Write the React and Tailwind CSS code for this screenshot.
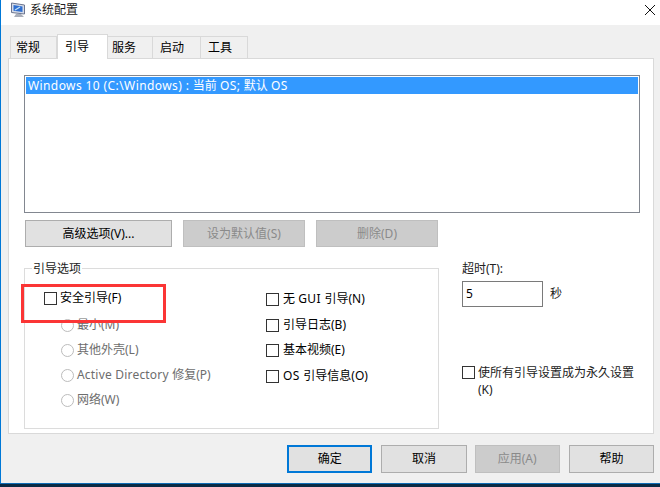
const FONT = '"Noto Sans", "Noto Sans CJK SC", sans-serif';

function L({ children }) {
  return <span className="tracking-[0.4px]">{children}</span>;
}

function S({ children }) {
  return <span className="tracking-[0.2px]">{children}</span>;
}

function Tab({ label, active, className }) {
  return (
    <div
      className={
        (active
          ? "h-[25px] -mb-px z-10 relative bg-white border border-b-0 border-[#d9d9d9] flex items-start pt-[3px] text-[12px] leading-[18px] text-black "
          : "h-[22px] bg-[#f0f0f0] border border-b-0 border-l-0 border-[#d9d9d9] flex items-start pt-[2px] text-[12px] leading-[18px] text-black ") + className
      }
    >
      {label}
    </div>
  );
}

function Btn({ children, disabled, primary, className }) {
  const tone = disabled
    ? "bg-[#cccccc] border-[#bfbfbf] text-[#8a8a8a]"
    : primary
      ? "bg-[#e1e1e1] border-[#0078d7] border-2 text-black"
      : "bg-[#e1e1e1] border-[#adadad] text-black";
  return (
    <div className={"border flex items-center justify-center text-[12px] leading-none " + tone + " " + className}>
      {children}
    </div>
  );
}

function Check({ children, className = "", gap = "ml-[3px]" }) {
  return (
    <div className={"flex items-center h-[14px] text-[12px] text-black " + className}>
      <span className="w-[13px] h-[13px] border border-[#333333] bg-white shrink-0" />
      <span className={gap + " whitespace-nowrap leading-none"}>{children}</span>
    </div>
  );
}

function Radio({ children }) {
  return (
    <div className="flex items-center h-[14px] text-[12px] text-[#6d6d6d]">
      <span className="w-[13px] h-[13px] rounded-full border border-[#bcbcbc] bg-white shrink-0" />
      <span className="ml-[3px] whitespace-nowrap leading-none">{children}</span>
    </div>
  );
}

export default function App() {
  return (
    <div className="w-[660px] h-[487px] relative overflow-hidden flex flex-col bg-[#f0f0f0]" style={{ fontFamily: FONT }}>
      <div className="h-[483px] flex flex-col border-l border-l-[#0078d7]">
        <div className="h-[25px] bg-white flex items-center shrink-0 pb-[5px]">
          <svg width="16" height="16" viewBox="0 0 16 16" className="ml-[9px]">
            <path d="M1.5 1 L14.5 3 V12 L1.5 10.5 Z" fill="#d5dbe8" stroke="#6b7590" strokeWidth="1" />
            <path d="M3.5 3 L12.5 4.4 V10 L3.5 8.8 Z" fill="#2f6fd0" />
            <path d="M5 8 L10 5" stroke="#bfe0f8" strokeWidth="1.4" fill="none" />
            <path d="M6 12 H11 L14 15 H4 Z" fill="#a9aeb9" />
          </svg>
          <span className="ml-[4px] text-[12px] text-[#222222] leading-none">系统配置</span>
          <svg width="10" height="10" viewBox="0 0 10 10" className="ml-auto mr-[5px]">
            <path d="M0 0 L10 10 M10 0 L0 10" stroke="#111111" strokeWidth="1" fill="none" />
          </svg>
        </div>

        <div className="flex-1 flex flex-col pl-[7px] pr-[6px] pt-[9px]">
          <div className="flex items-end h-[24px] pl-[2px]">
            <Tab label="常规" className="w-[47px] pl-[5px] border-l!" />
            <Tab label="引导" active className="w-[51px] pl-[7px]" />
            <Tab label="服务" className="w-[45px] pl-[4px]" />
            <Tab label="启动" className="w-[48px] pl-[7px]" />
            <Tab label="工具" className="w-[47px] pl-[7px]" />
          </div>

          <div className="h-[376px] bg-white border border-[#d9d9d9] flex flex-col pl-[15px] pr-[13px] pt-[16px]">
            <div className="h-[138px] border border-[#828790] p-[1px] bg-white">
              <div className="h-[17px] bg-[#3399ff] text-white text-[12px] leading-[17px] pl-[2px] whitespace-nowrap">
                <L>Windows 10 (C:\Windows) : </L>当前 <L>OS; </L>默认 <L>OS</L>
              </div>
            </div>

            <div className="flex mt-[7px] pl-[1px] h-[27px]">
              <Btn className="w-[147px]">高级选项(V)...</Btn>
              <Btn disabled className="w-[122px] ml-[11px]">设为默认值(S)</Btn>
              <Btn disabled className="w-[122px] ml-[11px]">删除(D)</Btn>
            </div>

            <div className="flex mt-[14px]">
              <div className="relative w-[415px] h-[161px] mt-[7px] border border-[#dcdcdc] flex pt-[22px]">
                <span className="absolute left-[7px] -top-[8px] bg-white px-[1px] text-[12px] leading-[16px] text-[#222222]">引导选项</span>
                <div className="w-[241px] pl-[19px] flex flex-col">
                  <Check>安全引导(F)</Check>
                  <div className="flex flex-col gap-[11px] mt-[13px] pl-[17px]">
                    <Radio>最小(M)</Radio>
                    <Radio>其他外壳(L)</Radio>
                    <Radio><S>Active Directory </S>修复(P)</Radio>
                    <Radio>网络(W)</Radio>
                  </div>
                </div>
                <div className="flex flex-col pt-[1px]">
                  <Check gap="ml-[4px]">无 <L>GUI </L>引导(N)</Check>
                  <Check gap="ml-[4px]" className="mt-[12px]">引导日志(B)</Check>
                  <Check gap="ml-[4px]" className="mt-[11px]">基本视频(E)</Check>
                  <Check gap="ml-[4px]" className="mt-[12px]"><L>OS </L>引导信息(O)</Check>
                </div>
              </div>

              <div className="ml-[23px] flex flex-col text-[12px] text-[#222222]">
                <span className="leading-[16px]">超时(T):</span>
                <div className="flex items-center mt-[4px]">
                  <div className="w-[81px] h-[26px] border border-[#7a7a7a] bg-white pl-[3px] flex items-center text-black">5</div>
                  <span className="ml-[7px]">秒</span>
                </div>
                <div className="flex mt-[57px]">
                  <span className="w-[13px] h-[13px] border border-[#333333] bg-white shrink-0 mt-[2px]" />
                  <span className="ml-[3px] w-[160px] leading-[17px]">使所有引导设置成为永久设置(K)</span>
                </div>
              </div>
            </div>
          </div>

          <div className="flex mt-[11px] h-[28px] pl-[279px]">
            <Btn primary className="w-[86px]">确定</Btn>
            <Btn className="w-[86px] ml-[9px]">取消</Btn>
            <Btn disabled className="w-[86px] ml-[8px]">应用(A)</Btn>
            <Btn className="w-[86px] ml-[9px]">帮助</Btn>
          </div>
        </div>
      </div>

      <div className="h-[4px] bg-[#0a2a44] border-t border-[#0f6cb5]" />

      <div className="absolute left-[21px] top-[284px] w-[145px] h-[39px] border-[3px] border-[#fb3535]" />
    </div>
  );
}
